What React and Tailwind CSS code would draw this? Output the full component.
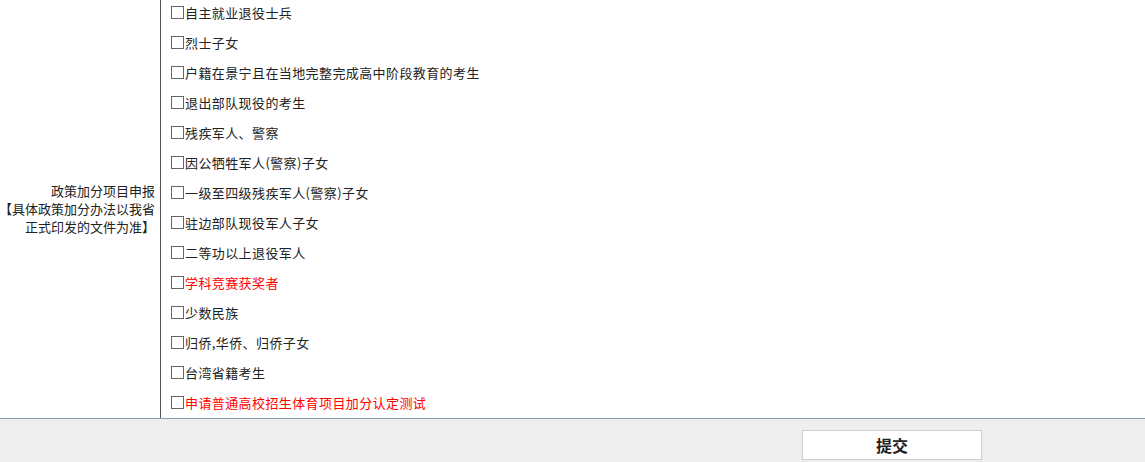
import React from 'react'

const items = [
    { label: '自主就业退役士兵' },
    { label: '烈士子女' },
    { label: '户籍在景宁且在当地完整完成高中阶段教育的考生' },
    { label: '退出部队现役的考生' },
    { label: '残疾军人、警察' },
    { label: '因公牺牲军人(警察)子女' },
    { label: '一级至四级残疾军人(警察)子女' },
    { label: '驻边部队现役军人子女' },
    { label: '二等功以上退役军人' },
    { label: '学科竞赛获奖者', red: true },
    { label: '少数民族' },
    { label: '归侨,华侨、归侨子女' },
    { label: '台湾省籍考生' },
    { label: '申请普通高校招生体育项目加分认定测试', red: true },
]

const App = () => {
    return (
        <div className="w-[1145px] h-[462px] overflow-hidden bg-white text-[13px] text-[#222]"
            style={{ fontFamily: '"Microsoft YaHei", "Noto Sans CJK SC", "Noto Sans", sans-serif' }}>
            <div className="-mt-[2px] flex border-b border-[#8a9fb0]">
                <div className="w-[161px] shrink-0 border-r border-[#555] flex items-center justify-end pr-[5px]">
                    <div className="text-right leading-[18px] pt-[2px] whitespace-nowrap">
                        政策加分项目申报<br />
                        【具体政策加分办法以我省<br />
                        正式印发的文件为准】
                    </div>
                </div>
                <div className="flex-1 pl-[10px]">
                    {items.map((it, i) => (
                        <div key={i} className="h-[30px] flex items-center">
                            <span className="w-[13px] h-[13px] border border-[#666] bg-white shrink-0 -mt-[2px]"></span>
                            <span className={'ml-[1px] tracking-[0.4px] ' + (it.red ? 'text-[#ff0000]' : 'text-[#222]')}>
                                {it.label}
                            </span>
                        </div>
                    ))}
                </div>
            </div>
            <div className="bg-[#eeeeee] h-[60px] pt-[11px] pl-[802px]">
                <button className="w-[180px] h-[30px] bg-white border border-[#cfcfcf] text-[16px] font-bold text-[#222] flex items-center justify-center">
                    提交
                </button>
            </div>
        </div>
    )
}

export default App;
